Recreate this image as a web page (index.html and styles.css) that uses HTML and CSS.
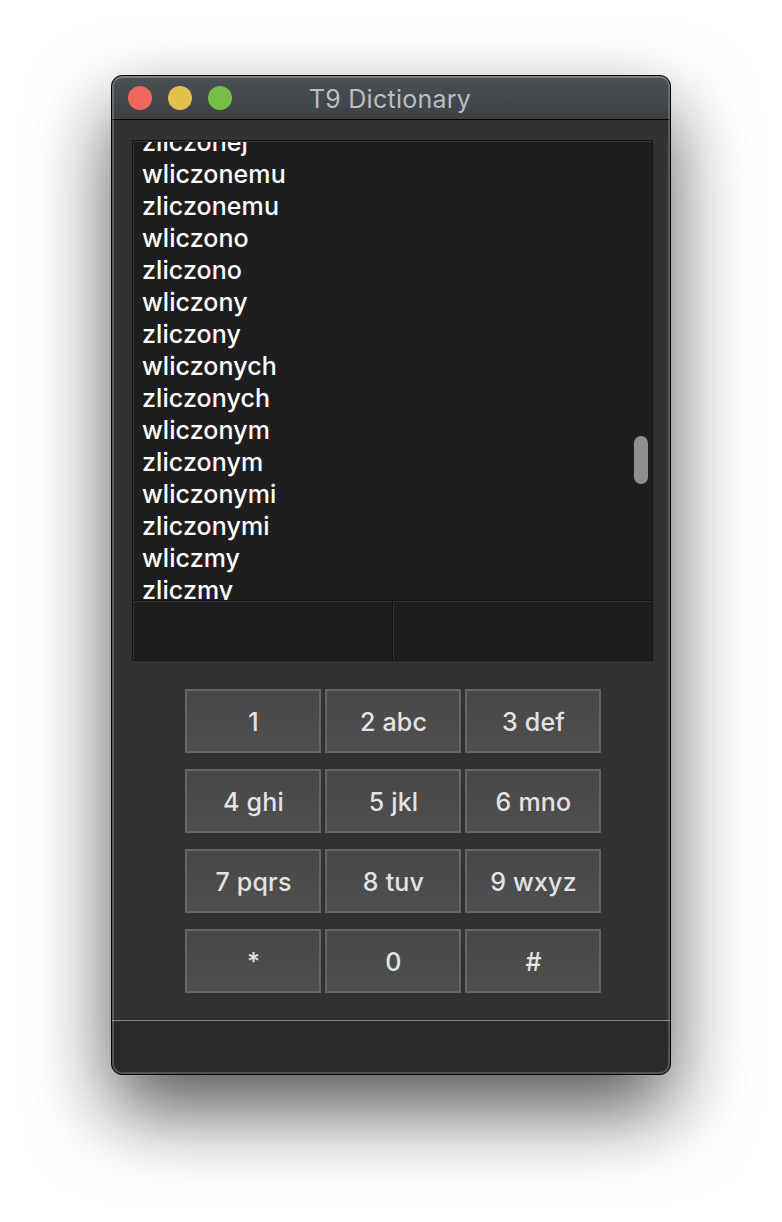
FILE: index.html
```html
<!DOCTYPE html>
<html lang="pl">
<head>
<meta charset="utf-8">
<title>T9 Dictionary</title>
<link rel="stylesheet" href="styles.css">
</head>
<body>
<main class="window">
  <header class="titlebar">
    <div class="lights">
      <span class="light close"></span>
      <span class="light minimize"></span>
      <span class="light zoom"></span>
    </div>
    <h1 class="title"><span>T9 Dictionary</span></h1>
  </header>
  <section class="content">
    <div class="results">
      <ul class="words">
        <li><span>zliczonej</span></li>
        <li><span>wliczonemu</span></li>
        <li><span>zliczonemu</span></li>
        <li><span>wliczono</span></li>
        <li><span>zliczono</span></li>
        <li><span>wliczony</span></li>
        <li><span>zliczony</span></li>
        <li><span>wliczonych</span></li>
        <li><span>zliczonych</span></li>
        <li><span>wliczonym</span></li>
        <li><span>zliczonym</span></li>
        <li><span>wliczonymi</span></li>
        <li><span>zliczonymi</span></li>
        <li><span>wliczmy</span></li>
        <li><span>zliczmy</span></li>
      </ul>
      <span class="scroll-thumb"></span>
    </div>
    <div class="fields">
      <div class="field"></div>
      <div class="field"></div>
    </div>
    <div class="keypad">
      <button class="key"><span>1</span></button>
      <button class="key"><span>2 abc</span></button>
      <button class="key"><span>3 def</span></button>
      <button class="key"><span>4 ghi</span></button>
      <button class="key"><span>5 jkl</span></button>
      <button class="key"><span>6 mno</span></button>
      <button class="key"><span>7 pqrs</span></button>
      <button class="key"><span>8 tuv</span></button>
      <button class="key"><span>9 wxyz</span></button>
      <button class="key"><span>*</span></button>
      <button class="key"><span>0</span></button>
      <button class="key"><span>#</span></button>
    </div>
  </section>
  <footer class="statusbar"></footer>
</main>
</body>
</html>
```
FILE: styles.css
```css
* { box-sizing: border-box; }

body {
  margin: 0;
  height: 1222px;
  padding: 75px 111px 0;
  background: #fff;
  overflow: hidden;
  font-family: Inter, "Liberation Sans", sans-serif;
}

.window {
  position: relative;
  display: flex;
  flex-direction: column;
  width: 560px;
  height: 1000px;
  border: 1px solid #000;
  border-radius: 11px;
  background: #323232;
  overflow: hidden;
  box-shadow: 0 36px 80px rgba(0, 0, 0, .66);
}

/* light inner rim over every bar */
.window::after {
  content: "";
  position: absolute;
  inset: 0;
  border: 2px solid rgba(255, 255, 255, .2);
  border-top-color: rgba(255, 255, 255, .28);
  border-radius: 10px;
  pointer-events: none;
}

.titlebar {
  display: grid;
  grid-template-columns: 1fr auto 1fr;
  align-items: center;
  height: 44px;
  flex: none;
  padding: 0 18px 0 16px;
  border-bottom: 1px solid #000;
  background: linear-gradient(#4a5053, #3b4144);
}

.lights { display: flex; gap: 16px; }
.light { width: 24px; height: 24px; border-radius: 50%; }
.close { background: #ee685c; }
.minimize { background: #e2c04b; }
.zoom { background: #74bf48; }

.title {
  margin: 3px 0 0;
  font-size: 25px;
  font-weight: 400;
  line-height: 32px;
  letter-spacing: .25px;
  color: #babec0;
}

.content {
  flex: 1;
  padding: 20px 17px 0 20px;
}

.results {
  position: relative;
  height: 460px;
  border: 1px solid #131313;
  border-bottom: 0;
  box-shadow: inset 1px 1px #333;
  background: #1e1e1e;
}

.words {
  height: 459px;
  margin: 0;
  padding: 1px 0 0 9px;
  overflow: hidden;
  list-style: none;
  font-size: 25px;
  font-weight: 500;
  line-height: 32px;
  letter-spacing: .08px;
  color: #fff;
  clip-path: inset(1px 0 0);
}
.words li:first-child { margin-top: -16px; }

.scroll-thumb {
  position: absolute;
  top: 295px;
  right: 4px;
  width: 14px;
  height: 48px;
  border-radius: 7px;
  background: #909090;
}

.fields {
  display: grid;
  grid-template-columns: 260px 1fr;
  height: 61px;
  border: 1px solid #131313;
  border-left: 0;
}
.field {
  border-left: 1px solid #131313;
  background: #1e1e1e;
  box-shadow: inset 1px 1px #333;
}

.keypad {
  display: grid;
  grid-template-columns: repeat(3, 136px);
  grid-auto-rows: 64px;
  gap: 16px 4px;
  margin: 28px 0 0 53px;
}
.key {
  margin: 0;
  padding: 2px 0 0 1px;
  border: 2px solid #656565;
  background: linear-gradient(#484848, #4f4f4f);
  color: #e3e3e3;
  font: 500 25px/32px Inter, "Liberation Sans", sans-serif;
  letter-spacing: .2px;
}

.statusbar {
  flex: none;
  height: 54px;
  border-top: 1px solid #858585;
  background: #2a2a2a;
}
```
